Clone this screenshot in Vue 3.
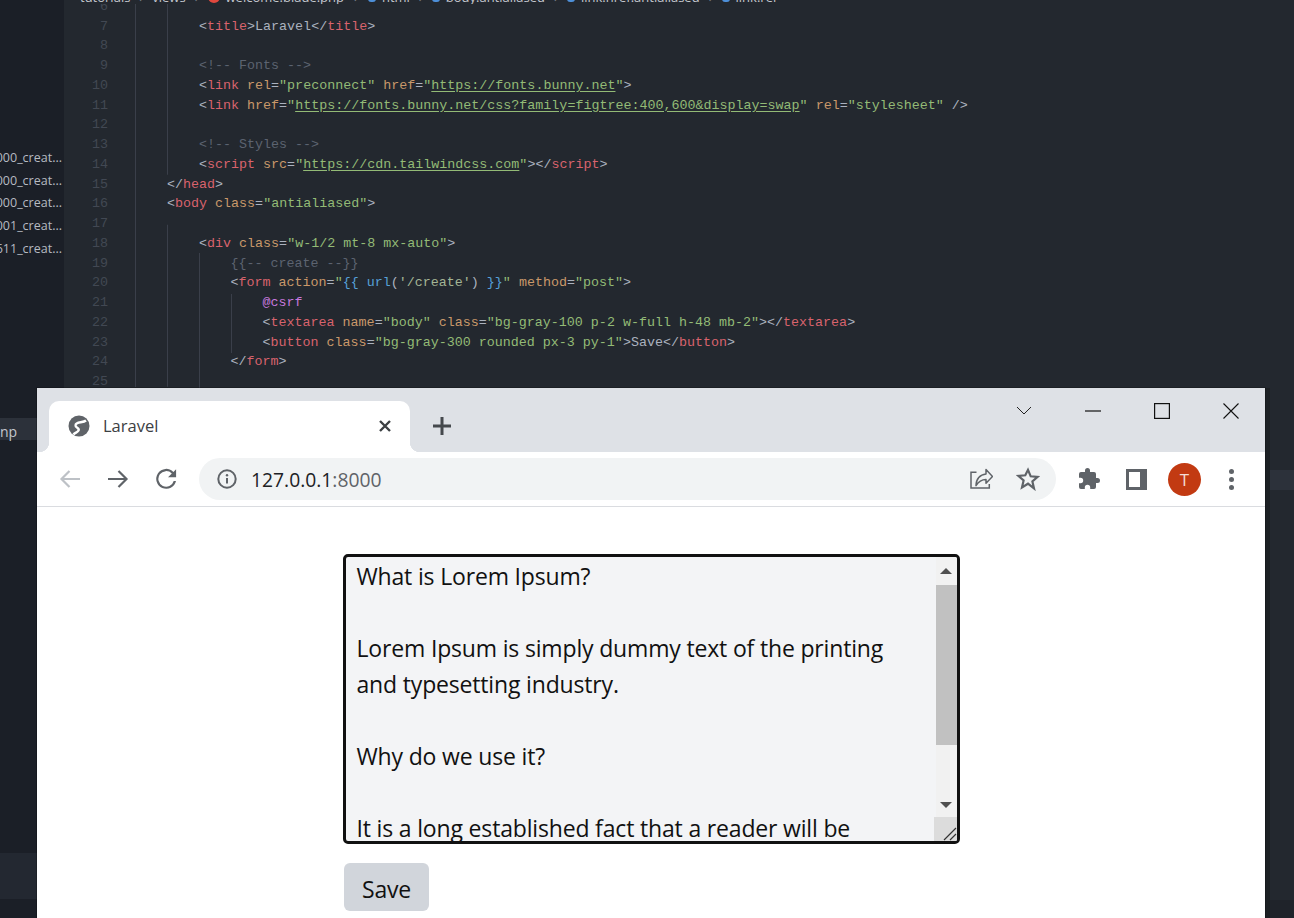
<script setup>
const S = (c, t) => ({ c, t })
const lines = [
  { n: 6, i: 0, p: [] },
  { n: 7, i: 4, p: [S('p','<'),S('r','title'),S('p','>'),S('w','Laravel'),S('p','</'),S('r','title'),S('p','>')] },
  { n: 8, i: 0, p: [] },
  { n: 9, i: 4, p: [S('c','<!-- Fonts -->')] },
  { n: 10, i: 4, p: [S('p','<'),S('r','link'),S('w',' '),S('o','rel'),S('p','='),S('g','"preconnect"'),S('w',' '),S('o','href'),S('p','='),S('g','"'),S('u','https://fonts.bunny.net'),S('g','"'),S('p','>')] },
  { n: 11, i: 4, p: [S('p','<'),S('r','link'),S('w',' '),S('o','href'),S('p','='),S('g','"'),S('u','https://fonts.bunny.net/css?family=figtree:400,600&display=swap'),S('g','"'),S('w',' '),S('o','rel'),S('p','='),S('g','"stylesheet"'),S('w',' '),S('p','/>')] },
  { n: 12, i: 0, p: [] },
  { n: 13, i: 4, p: [S('c','<!-- Styles -->')] },
  { n: 14, i: 4, p: [S('p','<'),S('r','script'),S('w',' '),S('o','src'),S('p','='),S('g','"'),S('u','https://cdn.tailwindcss.com'),S('g','"'),S('p','></'),S('r','script'),S('p','>')] },
  { n: 15, i: 3, p: [S('p','</'),S('r','head'),S('p','>')] },
  { n: 16, i: 3, p: [S('p','<'),S('r','body'),S('w',' '),S('o','class'),S('p','='),S('g','"antialiased"'),S('p','>')] },
  { n: 17, i: 0, p: [] },
  { n: 18, i: 4, p: [S('p','<'),S('r','div'),S('w',' '),S('o','class'),S('p','='),S('g','"w-1/2 mt-8 mx-auto"'),S('p','>')] },
  { n: 19, i: 5, p: [S('c','{{-- create --}}')] },
  { n: 20, i: 5, p: [S('p','<'),S('r','form'),S('w',' '),S('o','action'),S('p','='),S('g','"'),S('b','{{ '),S('b','url'),S('p',"("),S('q',"'/create'"),S('p',')'),S('b',' }}'),S('g','"'),S('w',' '),S('o','method'),S('p','='),S('g','"post"'),S('p','>')] },
  { n: 21, i: 6, p: [S('m','@csrf')] },
  { n: 22, i: 6, p: [S('p','<'),S('r','textarea'),S('w',' '),S('o','name'),S('p','='),S('g','"body"'),S('w',' '),S('o','class'),S('p','='),S('g','"bg-gray-100 p-2 w-full h-48 mb-2"'),S('p','></'),S('r','textarea'),S('p','>')] },
  { n: 23, i: 6, p: [S('p','<'),S('r','button'),S('w',' '),S('o','class'),S('p','='),S('g','"bg-gray-300 rounded px-3 py-1"'),S('p','>'),S('w','Save'),S('p','</'),S('r','button'),S('p','>')] },
  { n: 24, i: 5, p: [S('p','</'),S('r','form'),S('p','>')] },
  { n: 25, i: 0, p: [] }
]
const files = ['000_creat...','000_creat...','000_creat...','001_creat...','611_creat...']
</script>

<template>
  <div class="screen">
    <div class="ide">
      <aside class="side">
        <div class="side-files">
          <div v-for="(f, i) in files" :key="i" class="side-file"><span>{{ f }}</span></div>
        </div>
        <div class="side-active">np</div>
        <div class="side-panel"></div>
      </aside>
      <main class="editor">
        <div class="crumbs">
          <span>tutorials</span><span class="sep">›</span>
          <span>views</span><span class="sep">›</span>
          <i class="ci red"></i><span>welcome.blade.php</span><span class="sep wide">›</span>
          <i class="ci blue"></i><span>html</span><span class="sep">›</span>
          <i class="ci blue"></i><span>body.antialiased</span><span class="sep">›</span>
          <i class="ci blue"></i><span>link.href.antialiased</span><span class="sep">›</span>
          <i class="ci blue"></i><span>link.rel</span>
        </div>
        <div class="code">
          <div v-for="l in lines" :key="l.n" class="line">
            <span class="num">{{ l.n }}</span>
            <span class="text" :class="'ind' + l.i"><span v-for="(s, j) in l.p" :key="j" :class="s.c">{{ s.t }}</span></span>
          </div>
          <i class="guide g1"></i><i class="guide g2"></i><i class="guide g3"></i><i class="guide g4"></i>
        </div>
        <div class="right-row"></div>
        <div class="status"></div>
      </main>
    </div>

    <section class="win">
      <header class="tabs">
        <div class="tab">
          <svg class="globe" viewBox="0 0 24 24" width="24" height="24"><circle cx="12" cy="12" r="10.500" fill="#5f6368"/><path d="M19 6.500C16 9 9 7.500 8.500 11 8 14 13 13.500 11.500 16.500 10.500 18.500 8 18.500 6.500 20.500" fill="none" stroke="#fff" stroke-width="2.400"/></svg>
          <span class="tab-title">Laravel</span>
          <svg class="tab-x" viewBox="0 0 14 14" width="14" height="14"><path d="M2 2l10 10M12 2L2 12" stroke="#3c4043" stroke-width="2.400" fill="none"/></svg>
        </div>
        <svg class="plus" viewBox="0 0 20 20" width="20" height="20"><path d="M10 1v18M1 10h18" stroke="#45494d" stroke-width="3" fill="none"/></svg>
        <div class="controls">
          <svg viewBox="0 0 16 10" width="16" height="10" class="c-chev"><path d="M1 1l7 7 7-7" stroke="#222" stroke-width="1" fill="none"/></svg>
          <svg viewBox="0 0 16 2" width="16" height="2" class="c-min"><path d="M0 1h16" stroke="#111" stroke-width="1.200"/></svg>
          <svg viewBox="0 0 16 16" width="16" height="16" class="c-max"><rect x=".6" y=".6" width="14.800" height="14.800" fill="none" stroke="#111" stroke-width="1.200"/></svg>
          <svg viewBox="0 0 16 16" width="16" height="16" class="c-close"><path d="M.5.500l15 15M15.500.500l-15 15" stroke="#111" stroke-width="1.100" fill="none"/></svg>
        </div>
      </header>
      <nav class="bar">
        <svg class="nav" viewBox="0 0 24 24" width="24" height="24"><path d="M22 12H3.500M11.500 4l-8 8 8 8" stroke="#bdc1c6" stroke-width="2.200" fill="none"/></svg>
        <svg class="nav" viewBox="0 0 24 24" width="24" height="24"><path d="M2 12h18.500M12.500 4l8 8-8 8" stroke="#5f6368" stroke-width="2.200" fill="none"/></svg>
        <svg class="nav" viewBox="0 0 24 24" width="24" height="24"><path fill="#5f6368" d="M19.400 4.900A10 10 0 1 0 22 14h-2.300a7.800 7.800 0 1 1-1.900-7.500L14 10.300h8.100V2.200z"/></svg>
        <div class="omni">
          <svg viewBox="0 0 20 20" width="20" height="20" class="info"><circle cx="10" cy="10" r="8.700" fill="none" stroke="#5f6368" stroke-width="2"/><path d="M10 9v5.500" stroke="#5f6368" stroke-width="2"/><circle cx="10" cy="6.200" r="1.200" fill="#5f6368"/></svg>
          <span class="url">127.0.0.1<span class="port">:8000</span></span>
          <svg viewBox="0 0 24 24" width="24" height="24" class="share"><path d="M7.500 5.300H2V21h18.300v-4" stroke="#5f6368" stroke-width="1.500" fill="none"/><path d="M7 18.700C7 12 11 7.500 17 7V2.500l6.500 7-6.500 6.800v-3.800c-4.500 0-7.500 2-10 6.200z" stroke="#5f6368" stroke-width="1.500" fill="none" stroke-linejoin="round"/></svg>
          <svg viewBox="0 0 24 24" width="24" height="24" class="star"><path d="M12 2.800l2.700 6.500 7 .6-5.300 4.600 1.600 6.900L12 16.700l-6 3.700 1.600-6.900-5.300-4.600 7-.6z" fill="none" stroke="#5f6368" stroke-width="2.200" stroke-linejoin="miter"/></svg>
        </div>
        <svg class="puzzle" viewBox="0 0 24 24" width="24" height="24"><path fill="#5f6368" d="M20.500 11H19V7a2 2 0 0 0-2-2h-4V3.500a2.500 2.500 0 0 0-5 0V5H4a2 2 0 0 0-2 2v3.800h1.500a2.700 2.700 0 0 1 0 5.400H2V20a2 2 0 0 0 2 2h3.800v-1.500a2.700 2.700 0 0 1 5.400 0V22H17a2 2 0 0 0 2-2v-4h1.500a2.500 2.500 0 0 0 0-5z"/></svg>
        <div class="panel-ico"><i></i></div>
        <div class="avatar">T</div>
        <div class="dots"><i></i><i></i><i></i></div>
      </nav>
      <div class="page">
        <div class="form">
          <div class="ta">
            <div class="ta-text">
              <p>What is Lorem Ipsum?</p>
              <p>&nbsp;</p>
              <p>Lorem Ipsum is simply dummy text of the printing</p>
              <p>and typesetting industry.</p>
              <p>&nbsp;</p>
              <p>Why do we use it?</p>
              <p>&nbsp;</p>
              <p>It is a long established fact that a reader will be</p>
            </div>
            <div class="sb">
              <div class="sb-btn"><i class="up"></i></div>
              <div class="sb-thumb"></div>
              <div class="sb-space"></div>
              <div class="sb-btn sb-btn-down"><i class="down"></i></div>
              <div class="sb-corner">
                <svg viewBox="0 0 14 14" width="14" height="14"><path d="M1 13L13 1M7 13l6-6" stroke="#333" stroke-width="1.200" fill="none"/></svg>
              </div>
            </div>
          </div>
          <button class="save">Save</button>
        </div>
      </div>
    </section>
  </div>
</template>

<style>
html, body { margin: 0; background: #1b1f27; }
</style>

<style scoped>
.screen { position: relative; width: 1294px; height: 918px; overflow: hidden; background: #23282f; }
.ide { display: flex; height: 100%; }

.side { width: 64px; flex: none; background: #1b1f27; color: #b6bac2; font: 12.500px "Open Sans", sans-serif; display: flex; flex-direction: column; }
.side-files { padding-top: 147px; }
.side-file { height: 22.700px; line-height: 22.700px; display: flex; justify-content: flex-end; padding-right: 2px; white-space: nowrap; overflow: hidden; }
.side-file span { flex: none; }
.side-active { margin-top: 158px; height: 22px; line-height: 27px; background: #2c313a; color: #c3c7ce; font-size: 14px; }
.side-panel { margin-top: 413px; height: 46px; background: #232831; }

.editor { position: relative; flex: 1; min-width: 0; }
.crumbs { position: relative; z-index: 1; height: 14px; margin-top: -10px; padding-left: 16px; background: #23282f; font: 13px/14px "Open Sans", sans-serif; color: #c3c7ce; white-space: nowrap; display: flex; align-items: center; overflow: hidden; }
.sep { margin: 0 9px; color: #7b808a; }
.wide { margin: 0 10px; }
.ci { width: 12px; height: 12px; border-radius: 50%; flex: none; margin-right: 6px; }
.red { background: #e0483e; }
.blue { background: #4d8fd8; width: 8px; height: 10px; border-radius: 3px; }
.code { position: relative; font: 13.350px/19.750px "Liberation Mono", monospace; margin-top: -7.200px; }
.line { display: flex; height: 19.750px; white-space: pre; }
.num { width: 44px; text-align: right; color: #424853; flex: none; }
.text { color: #abb2bf; }
.ind0 { margin-left: 0; }
.ind3 { margin-left: 59px; }
.ind4 { margin-left: 91px; }
.ind5 { margin-left: 122.500px; }
.ind6 { margin-left: 154.500px; }
.p, .w { color: #abb2bf; }
.r { color: #d8636d; }
.o { color: #c9986a; }
.g { color: #93bb76; }
.q { color: #a3b595; }
.u { color: #93bb76; text-decoration: underline; text-underline-offset: 2px; }
.c { color: #5c6370; }
.b { color: #56a0d8; }
.m { color: #c678dd; }
.guide { position: absolute; top: 0; width: 1px; background: #3a3f4a; }
.g1 { left: 71px; height: 390px; }
.g2 { left: 103px; height: 390px; clip-path: polygon(0 0, 100% 0, 100% 178px, 0 178px, 0 228px, 100% 228px, 100% 100%, 0 100%); }
.g3 { left: 135px; top: 256px; height: 136px; }
.g4 { left: 167px; top: 297px; height: 59px; }
.right-row { position: absolute; right: 0; top: 470px; width: 29px; height: 20px; background: #2c313a; }
.status { position: absolute; left: 0; right: 0; bottom: 0; height: 18px; background: #1f232a; }

.win { position: absolute; left: 37px; top: 388px; width: 1228px; height: 530px; background: #fff; display: flex; flex-direction: column; box-shadow: 0 0 0 1px rgba(0,0,0,.2), 5px 0 0 #1c2024; }
.tabs { position: relative; height: 64px; flex: none; background: #dee1e6; display: flex; align-items: flex-end; padding-left: 12px; box-sizing: border-box; }
.tab { position: relative; width: 361px; height: 51px; background: #fff; border-radius: 10px 10px 0 0; display: flex; align-items: center; box-sizing: border-box; padding: 0 0 1px 18px; }
.tab::before, .tab::after { content: ""; position: absolute; bottom: 0; width: 10px; height: 10px; background: radial-gradient(circle at var(--cx) 0, #dee1e6 10px, #fff 10.500px); }
.tab::before { left: -10px; --cx: 0; }
.tab::after { right: -10px; --cx: 100%; }
.tab-title { margin: 0 0 2px 12px; font: 16.500px "Open Sans", sans-serif; color: #3c4043; flex: 1; }
.tab-x { margin-right: 18px; }
.plus { margin: 0 0 16px 22px; }
.controls { position: absolute; inset: 0 0 auto auto; display: flex; align-items: center; height: 45px; }
.c-chev { margin-right: 53px; }
.c-min { margin-right: 53px; }
.c-max { margin-right: 53px; }
.c-close { margin-right: 26px; }

.bar { height: 55px; flex: none; display: flex; align-items: center; box-sizing: border-box; padding-left: 21px; border-bottom: 1px solid #dadce0; }
.nav { margin-right: 24px; }
.omni { width: 857px; height: 42px; margin-left: -3px; border-radius: 21px; background: #f1f3f4; display: flex; align-items: center; box-sizing: border-box; padding: 0 16px 0 18px; flex: none; margin-right: 21px; }
.url { margin-left: 14px; flex: 1; font: 19.300px "Open Sans", sans-serif; color: #202124; }
.port { color: #5f6368; }
.star { margin-left: 23px; }
.puzzle { flex: none; }
.panel-ico { width: 21px; height: 21px; margin-left: 25px; background: #5f6368; position: relative; flex: none; }
.panel-ico i { position: absolute; left: 3px; top: 3px; width: 11px; height: 15px; background: #fff; }
.avatar { width: 33px; height: 33px; border-radius: 50%; background: #c23a12; color: #f3ddd5; text-align: center; font: 17px/33px "Open Sans", sans-serif; margin-left: 21px; flex: none; }
.dots { display: flex; flex-direction: column; gap: 3px; margin-left: 28px; }
.dots i { width: 5px; height: 5px; border-radius: 50%; background: #5f6368; }

.page { flex: 1; padding: 47px 0 0 306px; }
.form { width: 617px; }
.ta { display: flex; height: 290px; box-sizing: border-box; border: 3px solid #111; border-radius: 5px; background: #f3f4f6; overflow: hidden; }
.ta-text { flex: 1; padding: .5px 0 0 10.500px; font: 23px/36px "Open Sans", sans-serif; letter-spacing: -.17px; color: #111; overflow: hidden; white-space: nowrap; }
.ta-text p { margin: 0; }
.sb { width: 21.500px; flex: none; background: #f1f1f1; display: flex; flex-direction: column; }
.sb-btn { height: 28px; display: flex; align-items: center; justify-content: center; flex: none; }
.sb-btn-down { height: 24px; }
.sb-btn i { width: 0; height: 0; border-left: 6px solid transparent; border-right: 6px solid transparent; }
.up { border-bottom: 6px solid #505050; }
.down { border-top: 6px solid #505050; }
.sb-thumb { height: 160px; background: #c1c1c1; flex: none; }
.sb-space { flex: 1; }
.sb-corner { height: 24px; margin-left: -2px; background: #dcdcdc; display: flex; align-items: flex-end; justify-content: flex-end; flex: none; }
.save { display: block; margin-top: 19px; width: 85px; height: 48px; margin-left: 1px; border: 0; border-radius: 6px; background: #d1d5db; color: #111; font: 23px "Open Sans", sans-serif; letter-spacing: -.2px; padding: 3px 0 0; }
</style>
